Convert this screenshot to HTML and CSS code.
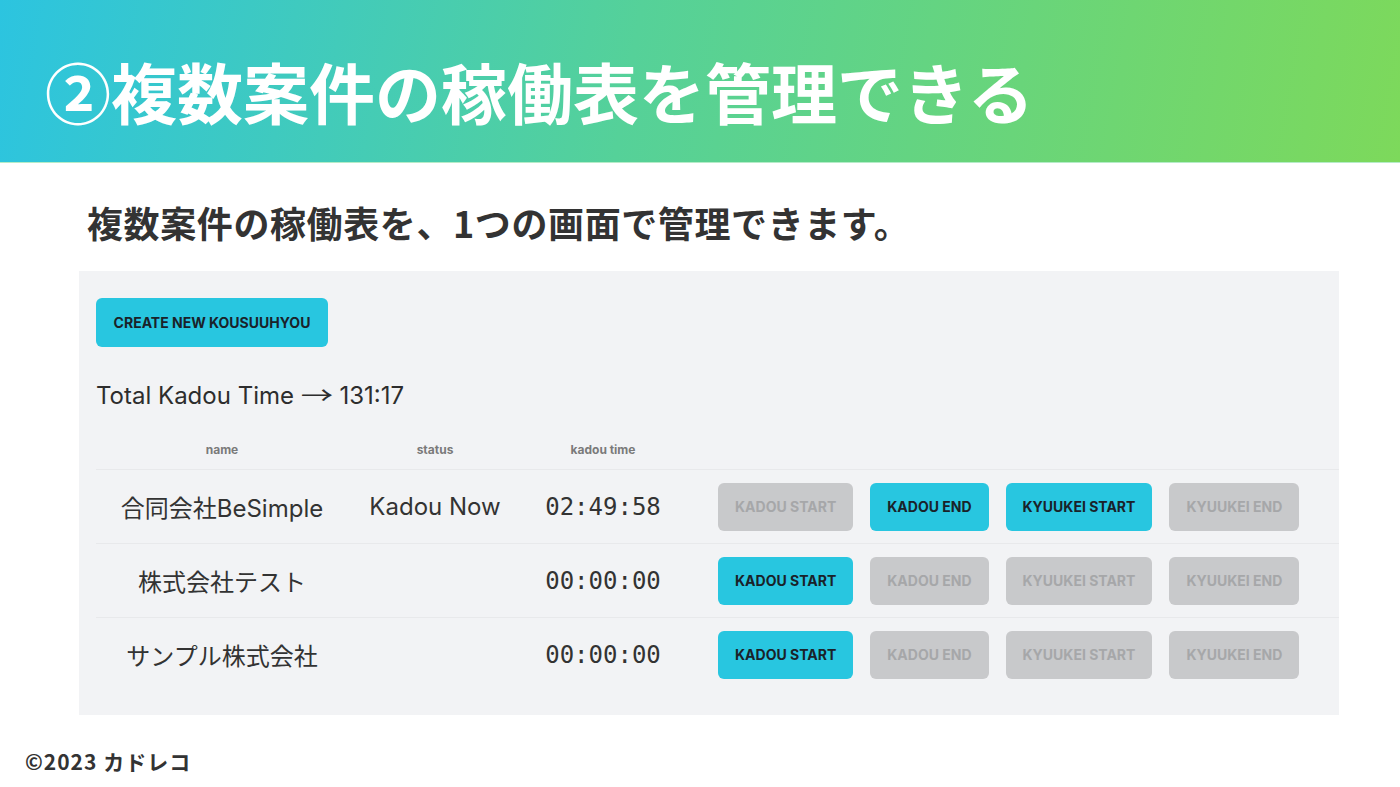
FILE: index.html
```html
<!DOCTYPE html>
<html lang="ja">
<head>
    <meta charset="UTF-8">
    <meta name="viewport" content="width=device-width, initial-scale=1.0">
    <title>複数案件の稼働表を管理できる</title>
    <link rel="stylesheet" href="styles.css">
</head>
<body>
    <!-- 見出し -->
    <header class="slide-head">
        <h1>②複数案件の稼働表を管理できる</h1>
    </header>

    <main class="slide-body">
        <p class="lead">複数案件の稼働表を、1つの画面で管理できます。</p>

        <!-- アプリ画面 -->
        <div class="panel">
            <button class="btn btn-on btn-create">CREATE NEW KOUSUUHYOU</button>
            <p class="total">Total Kadou Time <span class="arrow">→</span> 131:17</p>

            <table class="kadou-table">
                <thead>
                    <tr>
                        <th class="col-name">name</th>
                        <th class="col-status">status</th>
                        <th class="col-time">kadou time</th>
                        <th class="col-actions"></th>
                    </tr>
                </thead>
                <tbody>
                    <tr>
                        <td class="col-name">合同会社BeSimple</td>
                        <td class="col-status">Kadou Now</td>
                        <td class="col-time">02:49:58</td>
                        <td class="col-actions">
                            <div class="actions">
                                <button class="btn btn-off">KADOU START</button>
                                <button class="btn btn-on">KADOU END</button>
                                <button class="btn btn-on">KYUUKEI START</button>
                                <button class="btn btn-off">KYUUKEI END</button>
                            </div>
                        </td>
                    </tr>
                    <tr>
                        <td class="col-name">株式会社テスト</td>
                        <td class="col-status"></td>
                        <td class="col-time">00:00:00</td>
                        <td class="col-actions">
                            <div class="actions">
                                <button class="btn btn-on">KADOU START</button>
                                <button class="btn btn-off">KADOU END</button>
                                <button class="btn btn-off">KYUUKEI START</button>
                                <button class="btn btn-off">KYUUKEI END</button>
                            </div>
                        </td>
                    </tr>
                    <tr>
                        <td class="col-name">サンプル株式会社</td>
                        <td class="col-status"></td>
                        <td class="col-time">00:00:00</td>
                        <td class="col-actions">
                            <div class="actions">
                                <button class="btn btn-on">KADOU START</button>
                                <button class="btn btn-off">KADOU END</button>
                                <button class="btn btn-off">KYUUKEI START</button>
                                <button class="btn btn-off">KYUUKEI END</button>
                            </div>
                        </td>
                    </tr>
                </tbody>
            </table>
        </div>
    </main>

    <footer class="slide-foot">©2023 カドレコ</footer>
</body>
</html>
```

FILE: styles.css
```css
body {
    margin: 0;
    padding: 0;
    background-color: #ffffff;
    font-family: "Noto Sans CJK JP", "Noto Sans", sans-serif;
    color: #333333;
}
p {
    margin: 0;
}

/* 見出し帯 */
.slide-head {
    height: 163px;
    box-sizing: border-box;
    display: flex;
    align-items: center;
    padding: 18px 0 0 45px;
    background: linear-gradient(100deg, #2cc4e0 0%, #55d199 45%, #7dd95b 100%);
    border-bottom: 1px solid #b5ecc8;
}
.slide-head h1 {
    margin: 0;
    font-size: 66px;
    line-height: 1;
    font-weight: 700;
    color: #ffffff;
}

.slide-body {
    padding: 0 61px 0 79px;
}
.lead {
    margin: 35px 0 0 8px;
    font-size: 36px;
    line-height: 49px;
    font-weight: 700;
    letter-spacing: 0.6px;
    color: #333333;
}

/* アプリ画面 */
.panel {
    margin-top: 24px;
    width: 1260px;
    box-sizing: border-box;
    padding: 27px 0 24px 17px;
    background-color: #f2f3f5;
    font-family: Inter, "Noto Sans CJK JP", sans-serif;
}
.btn {
    height: 48px;
    padding: 0 17px;
    border: none;
    border-radius: 6px;
    font-family: Inter, sans-serif;
    font-size: 14px;
    font-weight: 700;
    white-space: nowrap;
}
.btn-on {
    background-color: #28c6e0;
    color: #1a2229;
}
.btn-off {
    background-color: #c8c9cb;
    color: #a6a7a9;
}
.btn-create {
    height: 49px;
    width: 232px;
    padding: 0;
}
.total {
    margin-top: 29px;
    font-size: 24px;
    line-height: 36px;
    color: #2d2d2d;
}
/* 矢印は少し長めに */
.total .arrow {
    display: inline-block;
    transform: scaleX(1.35);
    margin: 0 4px;
    font-family: "Noto Sans CJK JP", sans-serif;
}

.kadou-table {
    margin-top: 15px;
    width: 100%;
    border-collapse: collapse;
}
.kadou-table th {
    height: 40px;
    padding: 0;
    font-size: 12px;
    font-weight: 700;
    color: #7a7a7a;
    text-align: center;
    border-bottom: 1px solid #e8e9eb;
}
.kadou-table td {
    height: 73px;
    padding: 0;
    text-align: center;
    font-size: 24px;
    color: #333333;
    border-bottom: 1px solid #e8e9eb;
}
.kadou-table tbody tr:last-child td {
    border-bottom: none;
}
.col-name {
    width: 252px;
}
.col-status {
    width: 174px;
}
.col-time {
    width: 162px;
}
.kadou-table td.col-time {
    font-family: "DejaVu Sans Mono", "Liberation Mono", monospace;
    font-size: 24px;
}
.kadou-table .col-actions {
    padding-left: 34px;
    text-align: left;
}
.actions {
    display: flex;
    gap: 17px;
}

.slide-foot {
    margin: 32px 0 0 25px;
    font-size: 21px;
    line-height: 28px;
    font-weight: 700;
    letter-spacing: 1px;
    color: #333333;
}
```
